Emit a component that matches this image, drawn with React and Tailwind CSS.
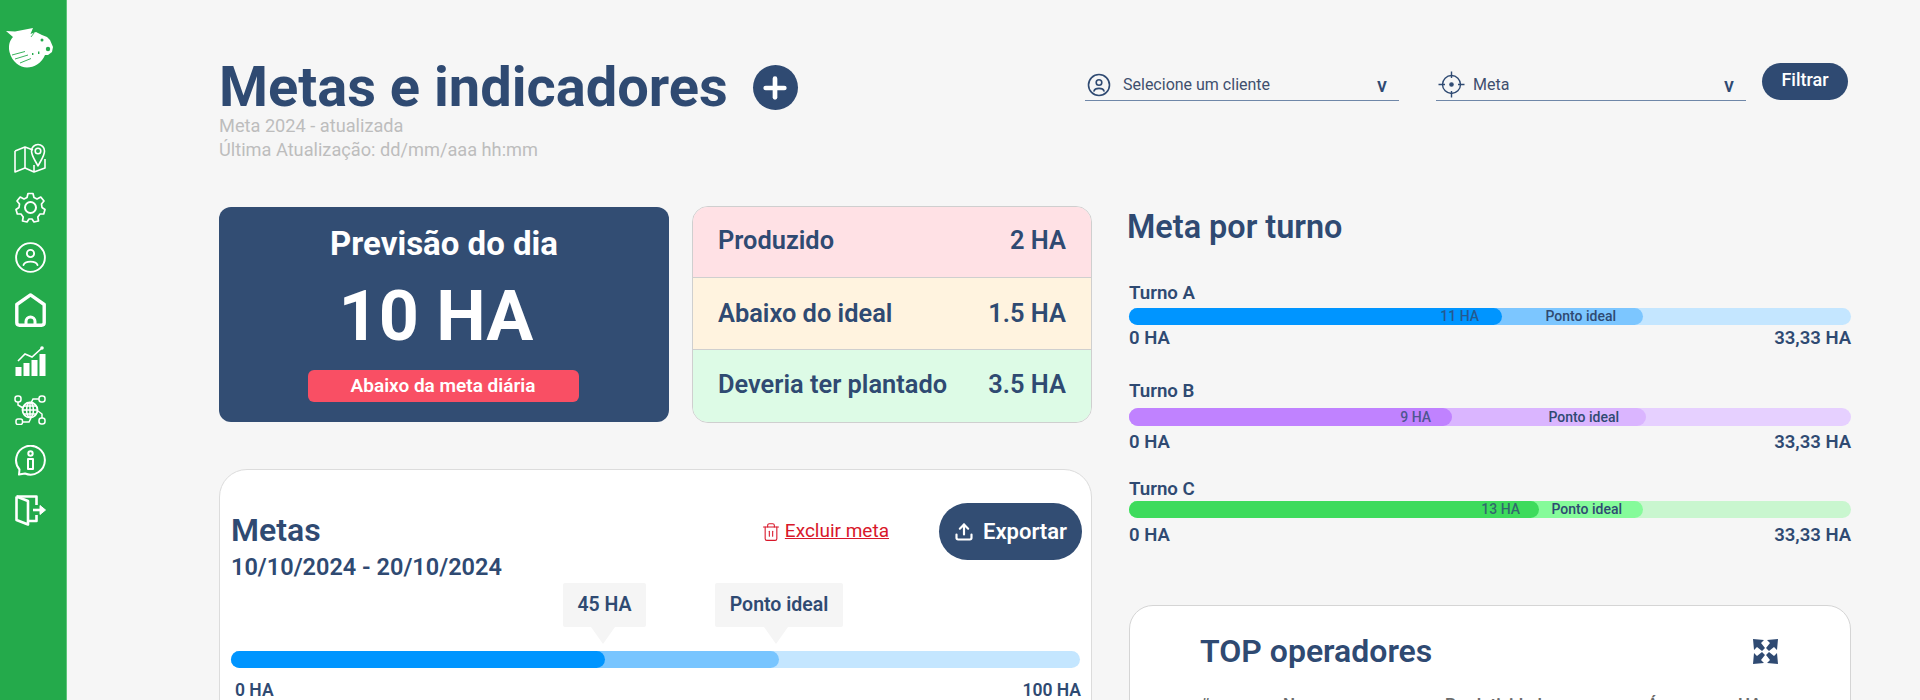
import React from "react";
import { Plus, Upload, Trash2 } from "lucide-react";

const turnos = [
  {
    name: "Turno A",
    track: "bg-[#c4e6ff]",
    mid: "bg-[#7cc6ff] w-[514px]",
    fill: "bg-[#0095ff] w-[373px] pr-[23px]",
    midPad: "pr-[27px]",
    value: "11 HA",
    barClass: "h-[17px] mb-[3px]",
    after: "mb-[33px]",
  },
  {
    name: "Turno B",
    track: "bg-[#e6d0ff]",
    mid: "bg-[#dab5ff] w-[517px]",
    fill: "bg-[#c082ff] w-[323px] pr-[21px]",
    midPad: "pr-[27px]",
    value: "9 HA",
    barClass: "h-[18px] mb-[6px]",
    after: "mb-[27px]",
    labelGap: "mb-[7px]",
  },
  {
    name: "Turno C",
    track: "bg-[#c9f6cf]",
    mid: "bg-[#85fb9a] w-[514px]",
    fill: "bg-[#3ddb5c] w-[410px] pr-[19px]",
    midPad: "pr-[21px]",
    value: "13 HA",
    barClass: "h-[17px] mb-[7px]",
    after: "mb-[60px]",
    labelGap: "mb-[2px]",
  },
];

function MapIcon() {
  return (
    <svg width="32" height="30" viewBox="0 0 32 30" fill="none" stroke="white" strokeWidth="1.6" strokeLinejoin="round">
      <path d="M1 8 L11 4 L19 7 M1 8 V29 L11 25 L20 29 L31 25 V16" />
      <path d="M11 4 V25 M20 22 V29" />
      <path d="M24 23 C21 17 17.5 13 17.5 8 A6.5 6.5 0 0 1 30.5 8 C30.5 13 27 17 24 23 Z" />
      <circle cx="24" cy="8" r="2.8" />
    </svg>
  );
}

function GearIcon() {
  return (
    <svg width="31" height="31" viewBox="0 0 31 31" fill="none" stroke="white" strokeWidth="1.7" strokeLinejoin="round">
      <path d="M13 1.5 H18 L19 5.5 L22 7 L25.8 5 L29 9 L26.5 12 L27 15.5 L30 17.5 L28.7 22 L25 22 L22.8 25 L23.5 29 L19 30 L17 27 H14 L12 30 L7.5 29 L8.2 25 L6 22 L2.3 22 L1 17.5 L4 15.5 L4.5 12 L2 9 L5.2 5 L9 7 L12 5.5 Z" />
      <circle cx="15.5" cy="15.5" r="5.5" strokeWidth="2" />
    </svg>
  );
}

function UserIcon() {
  return (
    <svg width="31" height="31" viewBox="0 0 31 31" fill="none" stroke="white" strokeWidth="1.9" strokeLinecap="round">
      <circle cx="15.5" cy="15.5" r="14.4" />
      <circle cx="15.5" cy="11.5" r="3.6" />
      <path d="M8.5 23 C10 18.5 21 18.5 22.5 23" />
    </svg>
  );
}

function HomeIcon() {
  return (
    <svg width="31" height="34" viewBox="0 0 31 34" fill="none" stroke="white" strokeWidth="3.4" strokeLinejoin="round">
      <path d="M1.8 11.5 L15.5 1.9 L29.2 11.5 V29.5 Q29.2 32.2 26.5 32.2 H4.5 Q1.8 32.2 1.8 29.5 Z" />
      <path d="M11 32 V28.5 A4.5 4.5 0 0 1 20 28.5 V32" strokeWidth="3" />
    </svg>
  );
}

function ChartIcon() {
  return (
    <svg width="31" height="30" viewBox="0 0 31 30" fill="none">
      <path d="M0.5 21 H6.5 V30 H0.5 Z M8.5 17 V30 H14.5 V17 Z M16.5 14 V30 H22.5 V14 Z M24.5 8 V30 H30.5 V8 Z" fill="white" />
      <path d="M3 15 L10 8 L17 11 L27 2" stroke="white" strokeWidth="1.6" />
      <circle cx="27" cy="2" r="1.8" fill="white" />
    </svg>
  );
}

function NetworkIcon() {
  return (
    <svg width="32" height="30" viewBox="0 0 32 30" fill="none" stroke="white" strokeWidth="1.5">
      <rect x="1" y="1" width="6" height="6" rx="2.5" />
      <rect x="25" y="1" width="6" height="6" rx="2.5" />
      <rect x="2" y="24" width="6.5" height="5.5" rx="2" />
      <rect x="25" y="23" width="6" height="6" rx="2.5" />
      <path d="M4 7 V10 L9 13 M25 4 H19 L17 8 M8 27 H15 L17 23 M28 23 V19 L24 16" />
      <circle cx="16" cy="15" r="7.5" strokeWidth="1.8" />
      <ellipse cx="16" cy="15" rx="3.4" ry="7.5" />
      <path d="M8.5 15 H23.5 M9.5 11 H22.5 M9.5 19 H22.5 M16 7.5 V22.5" />
    </svg>
  );
}

function InfoIcon() {
  return (
    <svg width="31" height="31" viewBox="0 0 31 31" fill="none" stroke="white" strokeWidth="2" strokeLinejoin="round">
      <path d="M4 29.5 L4.5 24.5 A14.4 14.4 0 1 1 10 28.5 Z" />
      <circle cx="15.5" cy="8.5" r="2.2" />
      <rect x="13" y="14" width="5" height="10" />
    </svg>
  );
}

function ExitIcon() {
  return (
    <svg width="31" height="31" viewBox="0 0 31 31" fill="none" stroke="white" strokeWidth="2.6" strokeLinejoin="round">
      <path d="M1.5 1.5 H21.5 V10 M21.5 20 V26 H13" />
      <path d="M1.5 1.5 V25 L13 29.5 V6 L1.5 1.5" />
      <path d="M18 15 H27" />
      <path d="M25 10.5 L30.5 15 L25 19.5 Z" fill="white" strokeWidth="1" />
    </svg>
  );
}

function Logo() {
  return (
    <svg width="48" height="40" viewBox="0 0 48 40" fill="white">
      <path d="M0 3 L9 3.5 L27 0 L24.5 6 L30 4 L36 7 L41 9 L44 12 L47 19 L46 24 L42 27 L39 27 C36 35 28 39.5 21 39.5 C14 39.5 6 34 3.5 24 C2 17 4 12 7 9 Z" />
      <path d="M6 27 L19 23.5 M9 31 L22 27 M14 35 L25 30.5" stroke="#24aa4b" strokeWidth="0.9" />
      <path d="M28 5 L25 9" stroke="#24aa4b" strokeWidth="0.8" />
      <circle cx="42" cy="21" r="2.2" fill="#24aa4b" />
      <circle cx="36" cy="12" r="1.5" fill="#24aa4b" />
      <path d="M26 25 h1.4 v2 h-1.4 z M32 23.5 h1.4 v2.5 h-1.4 z" fill="#24aa4b" />
    </svg>
  );
}

function Sidebar() {
  return (
    <aside className="w-[67px] h-[700px] shrink-0 bg-[#24aa4b] border-r border-[#5cc47a] flex flex-col items-center pr-[6px]">
      <div className="mt-[28px] mb-[75px] h-[40px]">
        <Logo />
      </div>
      <div className="flex flex-col items-center gap-[19px] w-full">
        <MapIcon />
        <GearIcon />
        <UserIcon />
        <div className="mt-[1px]">
          <HomeIcon />
        </div>
        <ChartIcon />
        <NetworkIcon />
        <div className="mt-[1px]">
          <InfoIcon />
        </div>
        <ExitIcon />
      </div>
    </aside>
  );
}

function FilterSelect({ icon, label, width, iconGap }) {
  return (
    <div className={`${width} h-[37px] mt-[1px] border-b-[1.5px] border-[#6f87a8] flex items-end text-[#3f4f6e] pl-[2px] pr-[12px] pb-[3px]`}>
      {icon}
      <span className={`${iconGap} text-[16px] leading-[24px] flex-1`}>{label}</span>
      <span className="text-[20px] leading-[24px] font-medium text-[#2f4a72]">v</span>
    </div>
  );
}

function Tooltip({ label, width, caretClass }) {
  return (
    <div className={`relative ${width} h-[44px] bg-[#f5f5f5] rounded-[2px] flex items-center justify-center text-[19.5px] font-semibold text-[#2f4a72]`}>
      {label}
      <div className={`absolute top-[44px] w-[24px] h-[17px] bg-[#f5f5f5] [clip-path:polygon(0_0,100%_0,50%_100%)] ${caretClass}`}></div>
    </div>
  );
}

export default function App() {
  return (
    <div className="flex h-[700px] overflow-hidden bg-[#f6f6f6] text-[#2f4a72] font-['Roboto',sans-serif]">
      <Sidebar />
      <main className="flex-1 min-w-0 pl-[152px] pr-[68px] overflow-hidden">
        {/* Header */}
        <div className="flex justify-between pt-[61px] pr-[4px] h-[206px]">
          <div>
            <div className="flex items-center gap-[25px] h-[53px]">
              <h1 className="text-[56px] leading-[53px] font-bold">Metas e indicadores</h1>
              <div className="w-[45px] h-[45px] rounded-full bg-[#2f4a72] flex items-center justify-center">
                <Plus size={32} color="white" strokeWidth={3.5} />
              </div>
            </div>
            <p className="text-[18.2px] leading-[24px] text-[#bdbdbd]">Meta 2024 - atualizada</p>
            <p className="text-[18.2px] leading-[24px] text-[#bdbdbd]">Última Atualização: dd/mm/aaa hh:mm</p>
          </div>
          <div className="flex items-start gap-[37px] pt-[2px]">
            <FilterSelect
              width="w-[314px]"
              iconGap="ml-[12px]"
              label="Selecione um cliente"
              icon={
                <svg width="24" height="24" viewBox="0 0 24 24" fill="none" stroke="#2f4a72" strokeWidth="1.6" strokeLinecap="round">
                  <circle cx="12" cy="12" r="10.5" />
                  <circle cx="12" cy="9.5" r="2.8" />
                  <path d="M7 18 C8 14.5 16 14.5 17 18" />
                </svg>
              }
            />
            <div className="flex items-start gap-[16px]">
              <FilterSelect
                width="w-[310px]"
                iconGap="ml-[8px]"
                label="Meta"
                icon={
                  <svg className="-mb-[1px]" width="27" height="27" viewBox="0 0 27 27" fill="none" stroke="#2f4a72" strokeWidth="1.4">
                    <circle cx="13.5" cy="13.5" r="9" />
                    <path d="M13.5 0.5 V7 M13.5 20 V26.5 M0.5 13.5 H7 M20 13.5 H26.5" />
                    <circle cx="13.5" cy="13.5" r="1.6" fill="#2f4a72" />
                  </svg>
                }
              />
              <button className="w-[86px] h-[37px] pb-[4px] rounded-full bg-[#2f4a72] text-white text-[18px] font-medium">Filtrar</button>
            </div>
          </div>
        </div>

        <div className="flex gap-[37px]">
          {/* Left column */}
          <div className="w-[873px] shrink-0">
            <div className="flex gap-[23px] items-center">
              <div className="w-[450px] h-[215px] rounded-[12px] bg-[#324d73] text-white flex flex-col items-center">
                <div className="mt-[20px] text-[33px] leading-[34px] font-bold">Previsão do dia</div>
                <div className="mt-[17px] pr-[16px] text-[70px] leading-[76px] font-bold">10 HA</div>
                <div className="mt-[16px] -ml-[2px] w-[271px] h-[32px] rounded-[6px] bg-[#f94f64] flex items-center justify-center text-[19px] font-semibold">Abaixo da meta diária</div>
              </div>
              <div className="w-[400px] h-[217px] rounded-[16px] border border-[#cfcfcf] overflow-hidden flex flex-col text-[25.4px] font-semibold">
                <div className="h-[71px] bg-[#ffe1e5] border-b border-[#cfcfcf] flex items-center justify-between px-[25px] pb-[3px]">
                  <span>Produzido</span>
                  <span>2 HA</span>
                </div>
                <div className="h-[72px] bg-[#fff3df] border-b border-[#cfcfcf] flex items-center justify-between px-[25px]">
                  <span>Abaixo do ideal</span>
                  <span>1.5 HA</span>
                </div>
                <div className="flex-1 bg-[#ddfbe6] flex items-center justify-between px-[25px] pb-[3px]">
                  <span>Deveria ter plantado</span>
                  <span>3.5 HA</span>
                </div>
              </div>
            </div>

            <div className="mt-[46px] h-[300px] rounded-[28px] border border-[#dcdcdc] bg-white pl-[11px] pr-[9px]">
              <div className="flex items-start justify-between pt-[33px]">
                <div className="pt-[7px]">
                  <h2 className="text-[32px] leading-[40px] font-semibold">Metas</h2>
                  <div className="mt-[3px] text-[23.5px] leading-[28px] font-semibold">10/10/2024 - 20/10/2024</div>
                </div>
                <div className="flex items-center">
                  <Trash2 size={20} color="#d8172a" strokeWidth={1.3} />
                  <span className="ml-[4px] text-[19px] text-[#d8172a] underline">Excluir meta</span>
                  <button className="ml-[50px] w-[143px] h-[57px] rounded-full bg-[#324d73] text-white flex items-center justify-center gap-[9px] text-[22px] font-semibold">
                    <Upload size={20} strokeWidth={2.6} />
                    Exportar
                  </button>
                </div>
              </div>
              <div className="flex mt-[2px] pl-[332px]">
                <Tooltip label="45 HA" width="w-[83px]" caretClass="left-[28px]" />
                <div className="w-[69px]"></div>
                <Tooltip label="Ponto ideal" width="w-[128px]" caretClass="left-[49px]" />
              </div>
              <div className="mt-[24px] mr-[2px] h-[17px] rounded-full bg-[#c4e6ff]">
                <div className="h-full w-[548px] rounded-full bg-[#78c5ff]">
                  <div className="h-full w-[374px] rounded-full bg-[#0095ff]"></div>
                </div>
              </div>
              <div className="flex justify-between mt-[12px] pl-[4px] pr-[1px] text-[17.5px] leading-[20px] font-semibold">
                <span>0 HA</span>
                <span>100 HA</span>
              </div>
            </div>
          </div>

          {/* Right column */}
          <div className="w-[722px] shrink-0">
            <h2 className="mt-[3px] text-[32.4px] leading-[36px] font-semibold -ml-[2px]">Meta por turno</h2>
            <div className="mt-[38px]">
              {turnos.map((t) => (
                <div key={t.name} className={t.after}>
                  <div className={`text-[18.7px] leading-[20px] font-semibold ${t.labelGap || "mb-[5px]"}`}>{t.name}</div>
                  <div className={`rounded-full ${t.track} ${t.barClass}`}>
                    <div className={`h-full rounded-full ${t.mid} ${t.midPad} flex items-center justify-end`}>
                      <div className={`h-full rounded-full ${t.fill} flex items-center justify-end mr-auto text-[14px] font-medium text-[#2f4a72]/80`}>
                        {t.value}
                      </div>
                      <span className="text-[14px] font-medium">Ponto ideal</span>
                    </div>
                  </div>
                  <div className="flex justify-between text-[18.5px] leading-[20px] font-semibold">
                    <span>0 HA</span>
                    <span>33,33 HA</span>
                  </div>
                </div>
              ))}
            </div>
            <div className="h-[300px] rounded-[24px] border border-[#d5d5d5] bg-white pl-[70px] pr-[72px] pt-[27px]">
              <div className="flex items-center justify-between">
                <h2 className="text-[32px] leading-[36px] font-semibold">TOP operadores</h2>
                <svg width="25" height="25" viewBox="0 0 25 25" fill="#2f4a72">
                  <path d="M0 0 L11 1 L8 4 L12 9 L9 12 L4 8 L1 11 Z" />
                  <path d="M25 0 L24 11 L21 8 L16 12 L13 9 L17 4 L14 1 Z" />
                  <path d="M0 25 L1 14 L4 17 L9 13 L12 16 L8 21 L11 24 Z" />
                  <path d="M25 25 L14 24 L17 21 L13 16 L16 13 L21 17 L24 14 Z" />
                </svg>
              </div>
              <div className="mt-[25px] flex text-[17px] font-semibold text-[#6b6b6b] leading-[20px]">
                <span className="w-[83px]">#</span>
                <span className="w-[162px]">Nome</span>
                <span className="w-[202px]">Produtividade</span>
                <span className="w-[91px]">Área</span>
                <span>HA</span>
              </div>
            </div>
          </div>
        </div>
      </main>
    </div>
  );
}
